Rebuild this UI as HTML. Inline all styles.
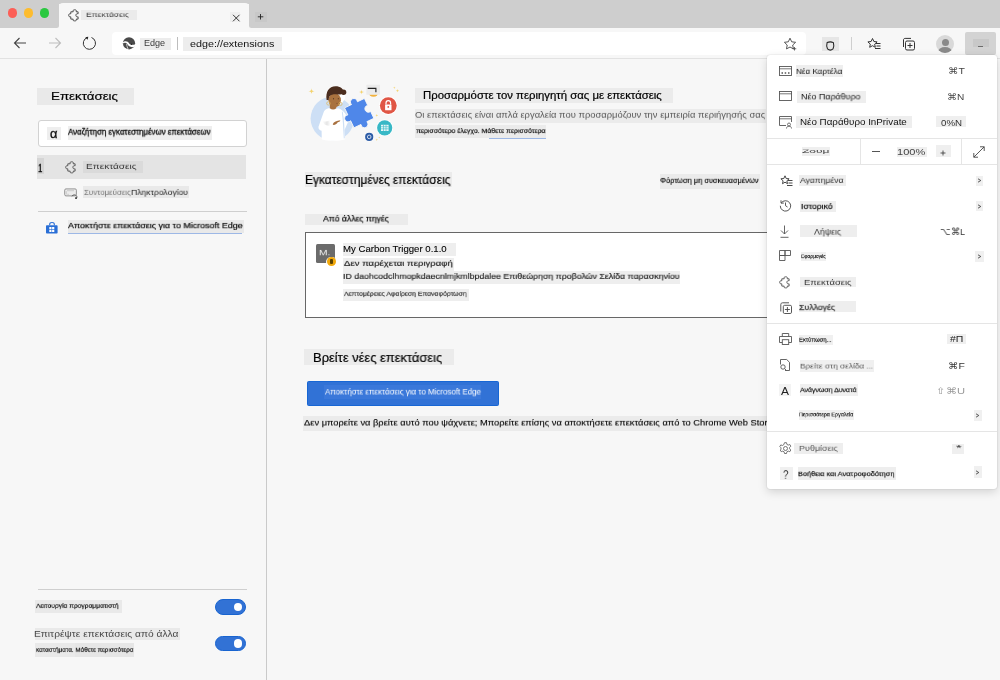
<!DOCTYPE html>
<html><head><meta charset="utf-8">
<style>
*{box-sizing:border-box;margin:0;padding:0}
html,body{width:1000px;height:680px;overflow:hidden;background:#f7f7f7;font-family:"Liberation Sans",sans-serif;color:#1a1a1a}
.a{position:absolute}
.x{position:absolute;white-space:nowrap;transform-origin:0 0;will-change:transform}
svg{position:absolute;overflow:visible}
</style></head><body>

<div class="a" style="left:0px;top:0px;width:59px;height:27.7px;background:#cecece;border-radius:0 0 2.5px 0"></div>
<div class="a" style="left:248.5px;top:0px;width:751.5px;height:27.7px;background:#cecece;border-radius:0 0 0 2.5px"></div>
<div class="a" style="left:59px;top:0px;width:189.5px;height:4px;background:#cecece;"></div>
<div class="a" style="left:7.75px;top:8.25px;width:9.5px;height:9.5px;background:#fc5f57;border-radius:50%"></div>
<div class="a" style="left:23.75px;top:8.25px;width:9.5px;height:9.5px;background:#fdbc2e;border-radius:50%"></div>
<div class="a" style="left:39.6px;top:8.25px;width:9.5px;height:9.5px;background:#2ac840;border-radius:50%"></div>
<div class="a" style="left:59px;top:3px;width:189.5px;height:26px;background:#f7f7f7;border-radius:4px 4px 0 0"></div>
<svg style="left:67.5px;top:9.2px" width="11" height="12" viewBox="0 0 11 12"><path d="M2.800 2.800 H5.200 C4.600 1.400 5.400 .8 6.700 .8 C8 .8 8.800 1.400 8.200 2.800 H10.100 V4.800 C8.800 4.300 7.900 5.200 7.900 6.300 C7.900 7.400 8.800 8.300 10.100 7.800 V10.100 H8.200 C8.800 11.400 8 11.900 6.700 11.900 C5.400 11.900 4.600 11.400 5.200 10.100 H2.800 V7.800 C1.500 8.300 .7 7.400 .7 6.300 C.7 5.200 1.500 4.300 2.800 4.800 Z" fill="none" stroke="#333" stroke-width=".85" stroke-linejoin="round"/></svg>
<div class="a" style="left:81.2px;top:10px;width:55.6px;height:10.4px;background:#ebebeb;"></div>
<div class="x" style="left:85.85px;top:11.95px;font-size:9px;line-height:9px;color:#3a3a3a;font-weight:400;font-family:&quot;Liberation Sans&quot;;transform:scale(0.9455,0.6889);">Επεκτάσεις</div>
<div class="a" style="left:230px;top:12px;width:10px;height:10px;background:#efefef;"></div>
<svg style="left:231.5px;top:14px" width="9" height="8" viewBox="0 0 9 8"><path d="M1 .8 7.500 7.300M7.500 .8 1 7.300" stroke="#222" stroke-width=".9"/></svg>
<div class="a" style="left:255px;top:12px;width:12px;height:10px;background:#c8c8c8;"></div>
<svg style="left:257px;top:13px" width="8" height="8" viewBox="0 0 8 8"><path d="M3.500 1v5.500M.8 3.800h5.500" stroke="#222" stroke-width=".9"/></svg>
<div class="a" style="left:0px;top:28px;width:1000px;height:30px;background:#f7f7f7;"></div>
<div class="a" style="left:0px;top:58px;width:1000px;height:1px;background:#e2e2e2;"></div>
<svg style="left:13px;top:37px" width="14" height="12" viewBox="0 0 14 12"><path d="M13 6H1.500M6.500 1 1.500 6l5 5" fill="none" stroke="#444" stroke-width="1.100"/></svg>
<svg style="left:48px;top:37px" width="14" height="12" viewBox="0 0 14 12"><path d="M1 6h11.500M7.500 1l5 5-5 5" fill="none" stroke="#bdbdbd" stroke-width="1.100"/></svg>
<svg style="left:82px;top:36px" width="15" height="15" viewBox="0 0 15 15"><path d="M9.500 1.500 A6.100 6.100 0 1 1 5.300 1.500" fill="none" stroke="#333" stroke-width="1"/><path d="M6.300 .8 L3.300 1.200 L5.600 3.700Z" fill="#222"/></svg>
<div class="a" style="left:112px;top:32px;width:694px;height:23px;background:#ffffff;border-radius:4px"></div>
<svg style="left:122px;top:36px" width="14" height="14" viewBox="0 0 14 14"><circle cx="7" cy="7.300" r="6.100" fill="#4a4a4a"/><path d="M.8 6.600 C2.500 4.600 5.800 4.700 7.200 7.400 C7.900 8.700 9.500 9.200 13.300 8.600 L13.200 10.300 C11 11.600 8.600 11.200 7.300 10.300 C6.300 9.600 5.800 8.700 5.300 7.900 C4.300 6.600 2.600 6.300 .9 7.400Z" fill="#fff"/><path d="M4.600 7.800 C4.900 9.800 5.200 11.500 6.300 13.400" fill="none" stroke="#fff" stroke-width=".7"/><circle cx="9.500" cy="8.300" r=".7" fill="#222"/></svg>
<div class="a" style="left:140px;top:37.6px;width:30.8px;height:12.3px;background:#ececec;"></div>
<div class="x" style="left:143.69px;top:39.28px;font-size:9px;line-height:9px;color:#3a3a3a;font-weight:400;font-family:&quot;Liberation Sans&quot;;transform:scale(1.0050,1.0000);">Edge</div>
<div class="a" style="left:177px;top:37.2px;width:1px;height:12.4px;background:#bdbdbd;"></div>
<div class="a" style="left:183.1px;top:37.2px;width:98.7px;height:13.4px;background:#ededed;"></div>
<div class="x" style="left:189.90px;top:39.00px;font-size:9.8px;line-height:9.8px;color:#111;font-weight:400;font-family:&quot;Liberation Sans&quot;;transform:scale(1.0974,1.0000);">edge://extensions</div>
<svg style="left:783px;top:37px" width="14" height="14" viewBox="0 0 14 14"><path d="M7 1.200l1.700 3.600 3.900.5-2.900 2.700.7 3.900L7 10 3.500 11.900l.7-3.900L1.400 5.300l3.900-.5z" fill="none" stroke="#444" stroke-width=".9"/><path d="M11.500 10v3.500M9.750 11.750h3.500" stroke="#444" stroke-width=".8"/></svg>
<div class="a" style="left:822px;top:37px;width:16.7px;height:14.4px;background:#e6e6e6;"></div>
<svg style="left:825.5px;top:41.3px" width="9" height="10" viewBox="0 0 9 10"><path d="M1.100 1.600 Q4.300 .1 7.400 1.600 Q8.500 5.600 7 7.900 Q4.300 10.300 1.500 7.900 Q0 5.600 1.100 1.600Z" fill="none" stroke="#222" stroke-width="1.050"/></svg>
<div class="a" style="left:850.5px;top:37px;width:1px;height:13px;background:#cfcfcf;"></div>
<svg style="left:867px;top:37px" width="14" height="14" viewBox="0 0 14 14"><path d="M5.500 1.500l1.400 3 3.200.4-2.400 2.200.6 3.200-2.800-1.600-2.800 1.600.6-3.200L.900 4.900l3.200-.4z" fill="none" stroke="#333" stroke-width="1"/><path d="M9 6.500h4.500M9.500 9h4M8 11.500h5.500" stroke="#333" stroke-width="1"/></svg>
<svg style="left:902px;top:37px" width="14" height="14" viewBox="0 0 14 14"><rect x="3.500" y="4" width="9" height="9" rx="1.500" fill="none" stroke="#333" stroke-width="1"/><path d="M1.500 10V3c0-1 .6-1.600 1.600-1.600H9" fill="none" stroke="#333" stroke-width="1"/><path d="M8 6v5M5.500 8.500h5" stroke="#333" stroke-width="1"/></svg>
<div class="a" style="left:936px;top:35px;width:18px;height:18px;border-radius:50%;background:#d9d9d9;overflow:hidden"><div class="a" style="left:5.500px;top:3.500px;width:7px;height:7px;border-radius:50%;background:#8a8a8a"></div><div class="a" style="left:2px;top:11.500px;width:14px;height:10px;border-radius:50%;background:#8a8a8a"></div></div>
<div class="a" style="left:965.2px;top:32px;width:31.3px;height:22.6px;background:#d3d3d3;border-radius:2px"></div>
<div class="a" style="left:973px;top:38.7px;width:16px;height:8.3px;background:#c8c8c8;"></div>
<div class="a" style="left:978px;top:45.6px;width:5px;height:1px;background:#555;opacity:.8"></div>
<div class="a" style="left:266px;top:59px;width:1px;height:621px;background:#cacaca;"></div>
<div class="a" style="left:37px;top:88px;width:97px;height:16.5px;background:#e9e9e9;"></div>
<div class="x" style="left:51.37px;top:91.01px;font-size:11.8px;line-height:11.8px;color:#000;font-weight:400;font-family:&quot;Liberation Sans&quot;;transform:scale(1.1293,1.0000);-webkit-text-stroke:.2px #000">Επεκτάσεις</div>
<div class="a" style="left:37.5px;top:119.5px;width:209px;height:27px;background:#ffffff;border:1px solid #d2d2d2;border-radius:3px;box-sizing:border-box"></div>
<div class="a" style="left:47.2px;top:126.5px;width:13.6px;height:13px;background:#eeeeee;"></div>
<div class="x" style="left:50.00px;top:128.42px;font-size:12.5px;line-height:12.5px;color:#111;font-weight:400;font-family:&quot;Liberation Sans&quot;;transform:scale(1.0286,1.0000);-webkit-text-stroke:.35px #111">α</div>
<div class="a" style="left:68px;top:126px;width:144px;height:13.6px;background:#eeeeee;"></div>
<div class="x" style="left:68.00px;top:127.80px;font-size:9px;line-height:9px;color:#000;font-weight:400;font-family:&quot;Liberation Sans&quot;;transform:scale(0.8796,0.9444);-webkit-text-stroke:.3px #000">Αναζήτηση εγκατεστημένων επεκτάσεων</div>
<div class="a" style="left:37.2px;top:154.5px;width:209.3px;height:24.5px;background:#e4e4e4;"></div>
<div class="a" style="left:37.2px;top:158.3px;width:7.2px;height:16px;background:#d5d5d5;"></div>
<div class="x" style="left:38.30px;top:163.03px;font-size:11.3px;line-height:11.3px;color:#111;font-weight:400;font-family:&quot;Liberation Sans&quot;;transform:scale(0.7000,1.0000);-webkit-text-stroke:.35px #111">1</div>
<svg style="left:64.5px;top:160.5px" width="11" height="12" viewBox="0 0 11 12"><path d="M2.800 2.800 H5.200 C4.600 1.400 5.400 .8 6.700 .8 C8 .8 8.800 1.400 8.200 2.800 H10.100 V4.800 C8.800 4.300 7.900 5.200 7.900 6.300 C7.900 7.400 8.800 8.300 10.100 7.800 V10.100 H8.200 C8.800 11.400 8 11.900 6.700 11.900 C5.400 11.900 4.600 11.400 5.200 10.100 H2.800 V7.800 C1.500 8.300 .7 7.400 .7 6.300 C.7 5.200 1.500 4.300 2.800 4.800 Z" fill="none" stroke="#444" stroke-width=".85" stroke-linejoin="round"/></svg>
<div class="a" style="left:82.9px;top:161px;width:59.9px;height:11.6px;background:#dadada;"></div>
<div class="x" style="left:86.48px;top:163.47px;font-size:9px;line-height:9px;color:#333;font-weight:400;font-family:&quot;Liberation Sans&quot;;transform:scale(1.1182,0.8444);">Επεκτάσεις</div>
<svg style="left:63.5px;top:187.5px" width="14" height="12" viewBox="0 0 14 12"><rect x=".7" y=".9" width="11.700" height="7" rx="1.300" fill="#ececec" stroke="#8a8a8a" stroke-width=".9"/><path d="M2.300 3.200v3.300M3.300 6.300h1.600M3 2.700h7" stroke="#bbb" stroke-width=".7"/><path d="M7.800 8.300 C9 6.400 11.600 6.400 12.800 8.200 C13.300 9 13 9.800 12.100 10.200" fill="none" stroke="#555" stroke-width=".9"/><circle cx="12" cy="10.100" r=".9" fill="#111"/></svg>
<div class="a" style="left:83.1px;top:186.2px;width:106.4px;height:12.3px;background:#e9e9e9;"></div>
<div class="x" style="left:83.50px;top:188.78px;font-size:9px;line-height:9px;color:#777;font-weight:400;font-family:&quot;Liberation Sans&quot;;transform:scale(0.8774,0.8556);">Συντομεύσεις</div>
<div class="x" style="left:131.15px;top:188.78px;font-size:9px;line-height:9px;color:#222;font-weight:400;font-family:&quot;Liberation Sans&quot;;transform:scale(0.9508,0.8556);">Πληκτρολογίου</div>
<div class="a" style="left:37.5px;top:211px;width:209px;height:1px;background:#cfcfcf;"></div>
<svg style="left:46px;top:221.5px" width="12" height="12" viewBox="0 0 12 12"><path d="M3.700 3.300V2.300C3.700 1.200 4.700.5 6 .5s2.300.7 2.300 1.800v1" fill="none" stroke="#2a6fd6" stroke-width="1.100"/><rect x="0" y="3.200" width="11.600" height="8.300" rx=".8" fill="#2a6fd6"/><rect x="3.300" y="5" width="2.200" height="2.200" fill="#fff"/><rect x="6.100" y="5" width="2.200" height="2.200" fill="#fff"/><rect x="3.300" y="7.800" width="2.200" height="2.200" fill="#fff"/><rect x="6.100" y="7.800" width="2.200" height="2.200" fill="#fff"/></svg>
<div class="a" style="left:68px;top:220.3px;width:176px;height:12.9px;background:#e9e9e9;"></div>
<div class="x" style="left:68.40px;top:222.33px;font-size:9px;line-height:9px;color:#000;font-weight:400;font-family:&quot;Liberation Sans&quot;;transform:scale(0.9881,0.8889);-webkit-text-stroke:.2px #000">Αποκτήστε επεκτάσεις για το Microsoft Edge</div>
<div class="a" style="left:68px;top:233px;width:174px;height:1px;background:#9db8e6;"></div>
<div class="a" style="left:37.5px;top:589px;width:209px;height:1px;background:#cfcfcf;"></div>
<div class="a" style="left:35px;top:599.8px;width:86.8px;height:13px;background:#e9e9e9;"></div>
<div class="x" style="left:35.50px;top:602.92px;font-size:9px;line-height:9px;color:#111;font-weight:400;font-family:&quot;Liberation Sans&quot;;transform:scale(0.7432,0.6667);;-webkit-text-stroke:.25px #111">Λειτουργία προγραμματιστή</div>
<div class="a" style="left:214.5px;top:599.3px;width:31.7px;height:15.6px;background:#3272d5;border-radius:8px;border:1px solid #1864d0;box-sizing:border-box"></div>
<div class="a" style="left:233.9px;top:603px;width:8.4px;height:8.4px;background:#ffffff;border-radius:50%"></div>
<div class="a" style="left:35.1px;top:628.1px;width:144.5px;height:12.3px;background:#e9e9e9;"></div>
<div class="x" style="left:34.47px;top:629.75px;font-size:9px;line-height:9px;color:#444;font-weight:400;font-family:&quot;Liberation Sans&quot;;transform:scale(1.1341,0.9778);">Επιτρέψτε επεκτάσεις από άλλα</div>
<div class="a" style="left:35.1px;top:642.8px;width:40px;height:14.1px;background:#e9e9e9;"></div>
<div class="a" style="left:75.1px;top:642.8px;width:58.9px;height:14.7px;background:#e6e6e6;"></div>
<div class="x" style="left:35.50px;top:647.02px;font-size:9px;line-height:9px;color:#111;font-weight:400;font-family:&quot;Liberation Sans&quot;;transform:scale(0.6993,0.6667);;-webkit-text-stroke:.25px #111">καταστήματα. Μάθετε περισσότερα</div>
<div class="a" style="left:214.5px;top:635.6px;width:31.7px;height:15.8px;background:#3272d5;border-radius:8px;border:1px solid #1864d0;box-sizing:border-box"></div>
<div class="a" style="left:233.9px;top:639.3px;width:8.4px;height:8.4px;background:#ffffff;border-radius:50%"></div>
<svg style="left:300px;top:80px" width="110" height="70" viewBox="0 0 110 70">
<circle cx="32.4" cy="38.5" r="21.8" fill="#cddff5"/>
<defs><linearGradient id="gsh" x1="0" y1="0" x2="1" y2="0"><stop offset="0" stop-color="#fff"/><stop offset=".55" stop-color="#dedede"/><stop offset="1" stop-color="#fff"/></linearGradient></defs>
<path d="M28.500 28.300 C25.500 29 24 30.800 23.200 33.500 L18.500 46.800 C18.200 48.800 19.300 50.300 21.600 50.800 L21.800 59.500 C28 61.300 39 61.300 45.200 59.300 L44.500 50 L48.300 41.500 C47 35 44 30.500 38.800 28.500 Z" fill="#fff"/>
<path d="M22.500 41 C23.500 44.500 26 46.200 30.500 45.500 L29.500 40.500 C27 41.800 24.500 41.800 22.500 41Z" fill="url(#gsh)" opacity=".8"/>
<path d="M41.800 31.500 C43 40 43.300 50 43.800 58.500 L44.700 58.300 C44.500 50 44.400 40 42.700 31.800Z" fill="#cddff5"/>
<path d="M29.800 25 h6.500 v3.300 c-2 1.600 -4.500 1.600 -6.500 0z" fill="#a8703f"/>
<circle cx="35.600" cy="15.500" r="9.800" fill="#fff"/>
<ellipse cx="34.700" cy="20.300" rx="6.200" ry="7" fill="#a9723f"/>
<path d="M26.600 20 C25.300 12 29 6.300 35.500 6.300 C40.500 6.300 43.500 9 44.200 12.800 C42.500 14.600 39 14.800 36.200 14.300 C33.300 14.200 30.800 14.800 29.600 16.200 C28.900 17.300 28.600 18.700 28.700 20.300 Z" fill="#4b2d1e"/>
<circle cx="43.600" cy="12.300" r="2.700" fill="#4b2d1e"/>
<circle cx="28.400" cy="23.400" r="1.700" fill="none" stroke="#e0b85a" stroke-width=".7"/>
<circle cx="40.400" cy="23.900" r="1.700" fill="none" stroke="#e0b85a" stroke-width=".7"/>
<circle cx="33.500" cy="18.700" r=".55" fill="#3a2418"/><circle cx="38.300" cy="18.700" r=".55" fill="#3a2418"/>
<path d="M36 23.300 q1.500 .6 2.500 -.3" fill="none" stroke="#7a4a2a" stroke-width=".5"/>
<path d="M32.700 44.300 C34 41.500 36.500 40.700 40.400 40.200 L39.500 41.800 L37.700 42.300 C37.200 43.600 35.500 45 33.500 45z" fill="#a8703f"/>
<g transform="translate(59.200 33.100) rotate(-25.400) scale(1.06)">
<path d="M-10.400 -10.400 H-3.070 A3.300 3.300 0 1 1 3.070 -10.400 H10.400 V-3.200 A3.300 3.300 0 1 0 10.400 3.200 V10.400 H3.070 A3.300 3.300 0 1 1 -3.070 10.400 H-10.400 V3.070 A3.300 3.300 0 1 1 -10.400 -3.070 Z" fill="#4f87e9" stroke="#f7f7f7" stroke-width=".8"/>
</g>
<circle cx="73.500" cy="11.500" r="5.200" fill="#f3b23c"/>
<rect x="66.300" y="4.800" width="13.700" height="10" fill="#ebebeb"/>
<path d="M67.700 8.400 H75.900 V12.200" fill="none" stroke="#222" stroke-width="1.1"/>
<circle cx="88.300" cy="25.600" r="9.300" fill="#fff"/>
<circle cx="88.300" cy="25.600" r="8.400" fill="#e05645"/>
<path d="M86 24.600 v-1.600 a2.300 2.300 0 0 1 4.600 0 v1.600" fill="none" stroke="#fff" stroke-width="1.200"/>
<rect x="85.100" y="24.400" width="6.400" height="5.800" rx=".5" fill="#fff"/>
<circle cx="88.300" cy="26.900" r=".9" fill="#e05645"/>
<circle cx="84.700" cy="47.800" r="8.400" fill="#fff"/>
<circle cx="84.700" cy="47.800" r="7.600" fill="#38b8c6"/>
<rect x="81" y="44.800" width="7.600" height="6.200" fill="#e8f6f8"/>
<path d="M81 46.700h7.600M81 48.800h7.600M83.500 44.800v6.200M86 44.800v6.200" stroke="#38b8c6" stroke-width=".6"/>
<circle cx="69.200" cy="56.900" r="4.700" fill="#fff"/>
<circle cx="69.200" cy="56.900" r="4.100" fill="#2d5ca6"/>
<circle cx="69.200" cy="56.900" r="1.800" fill="none" stroke="#dfe8f5" stroke-width=".9"/>
<path d="M11.5 8.3Q11.5 11.3 14.5 11.3Q11.5 11.3 11.5 14.3Q11.5 11.3 8.5 11.3Q11.5 11.3 11.5 8.3Z" fill="#f4d36e"/><path d="M61.5 9.5Q61.5 12 64.0 12Q61.5 12 61.5 14.5Q61.5 12 59.0 12Q61.5 12 61.5 9.5Z" fill="#f4d36e"/><path d="M94.3 6.5Q94.3 7.8 95.6 7.8Q94.3 7.8 94.3 9.1Q94.3 7.8 93.0 7.8Q94.3 7.8 94.3 6.5Z" fill="#f4d36e"/><path d="M97.5 9.1Q97.5 10.7 99.1 10.7Q97.5 10.7 97.5 12.299999999999999Q97.5 10.7 95.9 10.7Q97.5 10.7 97.5 9.1Z" fill="#f4d36e"/><path d="M76.8 34.1Q76.8 35.4 78.1 35.4Q76.8 35.4 76.8 36.699999999999996Q76.8 35.4 75.5 35.4Q76.8 35.4 76.8 34.1Z" fill="#f4d36e"/><path d="M76.8 58.5Q76.8 59.8 78.1 59.8Q76.8 59.8 76.8 61.099999999999994Q76.8 59.8 75.5 59.8Q76.8 59.8 76.8 58.5Z" fill="#f4d36e"/><path d="M79.2 56.4Q79.2 57.4 80.2 57.4Q79.2 57.4 79.2 58.4Q79.2 57.4 78.2 57.4Q79.2 57.4 79.2 56.4Z" fill="#f4d36e"/>
</svg>
<div class="a" style="left:415px;top:88.2px;width:257.8px;height:14.6px;background:#ebebeb;"></div>
<div class="x" style="left:423.46px;top:90.83px;font-size:10px;line-height:10px;color:#000;font-weight:400;font-family:&quot;Liberation Sans&quot;;transform:scale(1.1359,1.0000);-webkit-text-stroke:.2px #000">Προσαρμόστε τον περιηγητή σας με επεκτάσεις</div>
<div class="a" style="left:415px;top:108.8px;width:351px;height:14px;background:#ebebeb;"></div>
<div class="x" style="left:415.20px;top:111.02px;font-size:9px;line-height:9px;color:#555;font-weight:400;font-family:&quot;Liberation Sans&quot;;transform:scale(1.0442,0.9556);">Οι επεκτάσεις είναι απλά εργαλεία που προσαρμόζουν την εμπειρία περιήγησής σας</div>
<div class="a" style="left:415px;top:125.2px;width:131px;height:12.6px;background:#ebebeb;"></div>
<div class="x" style="left:415.50px;top:128.17px;font-size:9px;line-height:9px;color:#111;font-weight:400;font-family:&quot;Liberation Sans&quot;;transform:scale(0.7708,0.7000);;-webkit-text-stroke:.25px #111">περισσότερο έλεγχο. Μάθετε περισσότερα</div>
<div class="a" style="left:488.6px;top:138px;width:57.4px;height:1px;background:#9db8e6;"></div>
<div class="a" style="left:305px;top:172px;width:146.6px;height:15px;background:#ebebeb;"></div>
<div class="x" style="left:304.54px;top:173.50px;font-size:12.4px;line-height:12.4px;color:#000;font-weight:400;font-family:&quot;Liberation Sans&quot;;transform:scale(0.9633,1.0000);-webkit-text-stroke:.2px #000">Εγκατεστημένες επεκτάσεις</div>
<div class="a" style="left:659.6px;top:174px;width:100.4px;height:14.8px;background:#ebebeb;"></div>
<div class="x" style="left:660.30px;top:177.30px;font-size:9px;line-height:9px;color:#000;font-weight:400;font-family:&quot;Liberation Sans&quot;;transform:scale(0.8294,0.8667);-webkit-text-stroke:.15px #000">Φόρτωση μη συσκευασμένων</div>
<div class="a" style="left:305px;top:213.6px;width:103px;height:11.4px;background:#ebebeb;"></div>
<div class="x" style="left:323.00px;top:215.37px;font-size:9px;line-height:9px;color:#000;font-weight:400;font-family:&quot;Liberation Sans&quot;;transform:scale(0.9565,0.9222);-webkit-text-stroke:.2px #000">Από άλλες πηγές</div>
<div class="a" style="left:305px;top:232px;width:480px;height:85.5px;background:#ffffff;border:1.5px solid #676767;box-sizing:border-box"></div>
<div class="a" style="left:315.9px;top:244px;width:19.1px;height:18.7px;background:#6b6b6b;border-radius:1.5px"></div>
<div class="x" style="left:319.36px;top:249.03px;font-size:9px;line-height:9px;color:#f0f0f0;font-weight:400;font-family:&quot;Liberation Sans&quot;;transform:scale(1.1375,0.8889);">M.</div>
<div class="a" style="left:326.4px;top:256.7px;width:10.2px;height:10.2px;background:#ffffff;border-radius:50%"></div>
<div class="a" style="left:327.1px;top:257.4px;width:8.8px;height:8.8px;background:#f1a80b;border-radius:50%"></div>
<div class="a" style="left:329.6px;top:259.3px;width:3.8px;height:5.2px;background:#5a4200;border-radius:1px"></div>
<div class="a" style="left:343px;top:243px;width:113px;height:12.5px;background:#eeeeee;"></div>
<div class="x" style="left:342.55px;top:245.11px;font-size:9.2px;line-height:9.2px;color:#000;font-weight:400;font-family:&quot;Liberation Sans&quot;;transform:scale(1.0469,1.0000);-webkit-text-stroke:.1px #000">My Carbon Trigger 0.1.0</div>
<div class="a" style="left:343px;top:258.1px;width:111px;height:12.9px;background:#eeeeee;"></div>
<div class="x" style="left:343.60px;top:260.35px;font-size:9px;line-height:9px;color:#222;font-weight:400;font-family:&quot;Liberation Sans&quot;;transform:scale(1.0627,0.8333);-webkit-text-stroke:.2px #222">Δεν παρέχεται περιγραφή</div>
<div class="a" style="left:343px;top:271px;width:336.7px;height:12.5px;background:#eeeeee;"></div>
<div class="x" style="left:342.62px;top:273.25px;font-size:9px;line-height:9px;color:#222;font-weight:400;font-family:&quot;Liberation Sans&quot;;transform:scale(0.9778,0.8333);-webkit-text-stroke:.2px #222">ID daohcodclhmopkdaecnlmjkmlbpdalee Επιθεώρηση προβολών Σελίδα παρασκηνίου</div>
<div class="a" style="left:343px;top:288.7px;width:126px;height:11.9px;background:#eeeeee;"></div>
<div class="x" style="left:343.60px;top:291.42px;font-size:9px;line-height:9px;color:#333;font-weight:400;font-family:&quot;Liberation Sans&quot;;transform:scale(0.7650,0.6667);;-webkit-text-stroke:.25px #333">Λεπτομέρειες Αφαίρεση Επαναφόρτωση</div>
<div class="a" style="left:303.8px;top:348.8px;width:150.7px;height:16.5px;background:#ebebeb;"></div>
<div class="x" style="left:313.40px;top:350.60px;font-size:13px;line-height:13px;color:#000;font-weight:400;font-family:&quot;Liberation Sans&quot;;transform:scale(0.9961,1.0000);-webkit-text-stroke:.2px #000">Βρείτε νέες επεκτάσεις</div>
<div class="a" style="left:306.8px;top:381px;width:192px;height:24.8px;background:#3172d6;border-radius:1.5px;border:1px solid #1766d4;box-sizing:border-box"></div>
<div class="a" style="left:324px;top:385px;width:156.9px;height:14px;background:#3a78da;"></div>
<div class="x" style="left:324.50px;top:387.97px;font-size:9px;line-height:9px;color:#ffffff;font-weight:400;font-family:&quot;Liberation Sans&quot;;transform:scale(0.8824,0.9222);">Αποκτήστε επεκτάσεις για το Microsoft Edge</div>
<div class="a" style="left:303px;top:416px;width:470px;height:14.5px;background:#ebebeb;"></div>
<div class="x" style="left:303.50px;top:418.97px;font-size:9px;line-height:9px;color:#000;font-weight:400;font-family:&quot;Liberation Sans&quot;;transform:scale(1.0341,0.9222);-webkit-text-stroke:.12px #000">Δεν μπορείτε να βρείτε αυτό που ψάχνετε; Μπορείτε επίσης να αποκτήσετε επεκτάσεις από το Chrome Web Store.</div>
<div class="a" style="left:767px;top:55px;width:230px;height:434px;background:#ffffff;border-radius:3px;box-shadow:0 0 1.500px rgba(0,0,0,.22),0 3px 10px rgba(0,0,0,.15)"></div>
<svg style="left:779px;top:66px" width="13" height="10" viewBox="0 0 13 10"><rect x=".5" y=".5" width="12" height="9" fill="none" stroke="#555" stroke-width=".9"/><path d="M.5 2.800h12" stroke="#555" stroke-width=".8"/><path d="M2.500 7h1.500M5.700 7h1.500M9 7h1.500" stroke="#555" stroke-width="1.400"/></svg>
<div class="a" style="left:796.1px;top:65.1px;width:46.9px;height:11.6px;background:#eeeeee;"></div>
<div class="x" style="left:796.00px;top:67.58px;font-size:9px;line-height:9px;color:#111;font-weight:400;font-family:&quot;Liberation Sans&quot;;transform:scale(0.9000,0.8556);">Νέα Καρτέλα</div>
<div class="x" style="left:947.74px;top:67.23px;font-size:9px;line-height:9px;color:#444;font-weight:400;font-family:&quot;Liberation Sans&quot;;transform:scale(1.1615,1.0000);">⌘T</div>
<svg style="left:779px;top:91px" width="13" height="10" viewBox="0 0 13 10"><rect x=".5" y=".5" width="12" height="9" fill="none" stroke="#555" stroke-width=".9"/><path d="M.5 2.800h12" stroke="#555" stroke-width=".8"/></svg>
<div class="a" style="left:797.2px;top:91.25px;width:68.5px;height:11.65px;background:#eeeeee;"></div>
<div class="x" style="left:800.71px;top:93.06px;font-size:9px;line-height:9px;color:#111;font-weight:400;font-family:&quot;Liberation Sans&quot;;transform:scale(0.9898,0.9111);">Νέο Παράθυρο</div>
<div class="x" style="left:947.48px;top:92.58px;font-size:9px;line-height:9px;color:#444;font-weight:400;font-family:&quot;Liberation Sans&quot;;transform:scale(1.1214,1.0000);">⌘N</div>
<svg style="left:779px;top:115.5px" width="13" height="13" viewBox="0 0 13 13"><path d="M7 9.500H.5V.5h12V6" fill="none" stroke="#555" stroke-width=".9"/><path d="M.5 2.800h12" stroke="#555" stroke-width=".8"/><circle cx="10" cy="8.500" r="1.500" fill="none" stroke="#555" stroke-width=".8"/><path d="M7.500 12.500c0-1.500 1-2.300 2.500-2.300s2.500.8 2.500 2.300" fill="none" stroke="#555" stroke-width=".8"/></svg>
<div class="a" style="left:796.1px;top:116.2px;width:115.6px;height:12.3px;background:#eeeeee;"></div>
<div class="x" style="left:799.51px;top:118.08px;font-size:9px;line-height:9px;color:#111;font-weight:400;font-family:&quot;Liberation Sans&quot;;transform:scale(1.0887,1.0000);">Νέο Παράθυρο InPrivate</div>
<div class="a" style="left:936.1px;top:116.1px;width:29.7px;height:11.2px;background:#efefef;"></div>
<div class="x" style="left:940.90px;top:118.98px;font-size:9px;line-height:9px;color:#333;font-weight:400;font-family:&quot;Liberation Sans&quot;;transform:scale(1.0789,1.0000);">0%N</div>
<div class="a" style="left:767px;top:138.4px;width:230px;height:1px;background:#e5e5e5;"></div>
<div class="a" style="left:802px;top:147.2px;width:27.9px;height:9.3px;background:#efefef;"></div>
<div class="x" style="left:802.30px;top:148.97px;font-size:9px;line-height:9px;color:#444;font-weight:400;font-family:&quot;Liberation Sans&quot;;transform:scale(1.3350,0.5556);">Ζουμ</div>
<div class="a" style="left:860.2px;top:139px;width:1px;height:25px;background:#e5e5e5;"></div>
<div class="a" style="left:872px;top:151px;width:8px;height:1px;background:#555;"></div>
<div class="a" style="left:896.6px;top:147.3px;width:30.1px;height:10.1px;background:#efefef;"></div>
<div class="x" style="left:896.77px;top:148.38px;font-size:9px;line-height:9px;color:#444;font-weight:400;font-family:&quot;Liberation Sans&quot;;transform:scale(1.2273,1.0000);">100%</div>
<div class="a" style="left:936px;top:145px;width:14.7px;height:11.7px;background:#efefef;"></div>
<svg style="left:940.3px;top:149.6px" width="6" height="6" viewBox="0 0 6 6"><path d="M3 .5v5M.5 3h5" stroke="#333" stroke-width=".8"/></svg>
<div class="a" style="left:961.2px;top:139px;width:1px;height:25px;background:#e5e5e5;"></div>
<svg style="left:972.5px;top:145.5px" width="12" height="12" viewBox="0 0 12 12"><path d="M.8 11.200 11.200.8M11.200.8H7M11.200.8V5M.8 11.200H5M.8 11.200V7" fill="none" stroke="#444" stroke-width=".9"/></svg>
<div class="a" style="left:767px;top:164px;width:230px;height:1px;background:#e5e5e5;"></div>
<svg style="left:779.5px;top:175px" width="13" height="12" viewBox="0 0 13 12"><path d="M5 .8l1.200 2.700 2.900.3-2.200 2 .6 2.900L5 7.200 2.500 8.700l.6-2.900-2.200-2 2.900-.3z" fill="none" stroke="#333" stroke-width=".9"/><path d="M8 5.500h4.500M8.500 8h4M7 10.500h5.500" stroke="#333" stroke-width=".9"/></svg>
<div class="a" style="left:799.3px;top:175.3px;width:46.3px;height:10.5px;background:#eeeeee;"></div>
<div class="x" style="left:800.10px;top:177.15px;font-size:9px;line-height:9px;color:#2a2a2a;font-weight:400;font-family:&quot;Liberation Sans&quot;;transform:scale(0.9522,0.8333);">Αγαπημένα</div>
<div class="a" style="left:976px;top:175.9px;width:7.4px;height:9.7px;background:#f0f0f0;"></div>
<svg style="left:977.0px;top:178.0px" width="5" height="5" viewBox="0 0 5 5"><path d="M1 .8 3.800 2.500 1 4.200" fill="none" stroke="#333" stroke-width=".8"/></svg>
<svg style="left:779.2px;top:199px" width="13" height="13" viewBox="0 0 13 13"><path d="M2.200 4A5.200 5.200 0 1 1 1.300 6.800" fill="none" stroke="#444" stroke-width=".9"/><path d="M2 1.300v2.800h2.800M6.500 3.500v3.200l2 1.300" fill="none" stroke="#444" stroke-width=".9"/></svg>
<div class="a" style="left:800.1px;top:201.2px;width:35.5px;height:10.5px;background:#eeeeee;"></div>
<div class="x" style="left:801.34px;top:202.55px;font-size:9px;line-height:9px;color:#111;font-weight:400;font-family:&quot;Liberation Sans&quot;;transform:scale(0.9563,0.8333);;-webkit-text-stroke:.25px #111">Ιστορικό</div>
<div class="a" style="left:976px;top:201.4px;width:7.4px;height:9.4px;background:#f0f0f0;"></div>
<svg style="left:977.0px;top:203.5px" width="5" height="5" viewBox="0 0 5 5"><path d="M1 .8 3.800 2.500 1 4.200" fill="none" stroke="#333" stroke-width=".8"/></svg>
<svg style="left:780.4px;top:225px" width="9" height="13" viewBox="0 0 9 13"><path d="M4.500 .5v8.500M1 5.500l3.500 3.500 3.500-3.500M.5 12.300h8" fill="none" stroke="#555" stroke-width=".9"/></svg>
<div class="a" style="left:800px;top:225px;width:56.5px;height:11.6px;background:#eeeeee;"></div>
<div class="x" style="left:814.40px;top:227.60px;font-size:9px;line-height:9px;color:#333;font-weight:400;font-family:&quot;Liberation Sans&quot;;transform:scale(0.9750,0.9444);">Λήψεις</div>
<div class="x" style="left:939.68px;top:226.96px;font-size:9.5px;line-height:9.5px;color:#333;font-weight:400;font-family:&quot;Liberation Sans&quot;;transform:scale(0.9154,1.0000);">⌥⌘L</div>
<svg style="left:778.9px;top:250.2px" width="12" height="11" viewBox="0 0 12 11"><path d="M.5 .5h5.500v5H.5zM.5 5.500h5.500v5H.5zM6 .5h5.500v5H6z" fill="none" stroke="#555" stroke-width=".9"/></svg>
<div class="a" style="left:800.5px;top:252px;width:25.4px;height:9.3px;background:#f0f0f0;"></div>
<div class="x" style="left:800.65px;top:253.97px;font-size:9px;line-height:9px;color:#222;font-weight:400;font-family:&quot;Liberation Sans&quot;;transform:scale(0.5455,0.5556);;-webkit-text-stroke:.25px #222">Εφαρμογές</div>
<div class="a" style="left:975.3px;top:251px;width:8.4px;height:10.9px;background:#f0f0f0;"></div>
<svg style="left:977.0px;top:254.0px" width="5" height="5" viewBox="0 0 5 5"><path d="M1 .8 3.800 2.500 1 4.200" fill="none" stroke="#333" stroke-width=".8"/></svg>
<svg style="left:778.6px;top:275.9px" width="11" height="12" viewBox="0 0 11 12"><path d="M2.800 2.800 H5.200 C4.600 1.400 5.400 .8 6.700 .8 C8 .8 8.800 1.400 8.200 2.800 H10.100 V4.800 C8.800 4.300 7.900 5.200 7.900 6.300 C7.900 7.400 8.800 8.300 10.100 7.800 V10.100 H8.200 C8.800 11.400 8 11.900 6.700 11.900 C5.400 11.900 4.600 11.400 5.200 10.100 H2.800 V7.800 C1.500 8.300 .7 7.400 .7 6.300 C.7 5.200 1.500 4.300 2.800 4.800 Z" fill="none" stroke="#444" stroke-width=".85" stroke-linejoin="round"/></svg>
<div class="a" style="left:800px;top:276.7px;width:56px;height:10.8px;background:#eeeeee;"></div>
<div class="x" style="left:803.55px;top:278.60px;font-size:9px;line-height:9px;color:#333;font-weight:400;font-family:&quot;Liberation Sans&quot;;transform:scale(1.0523,0.8667);">Επεκτάσεις</div>
<svg style="left:779.9px;top:302px" width="12" height="12" viewBox="0 0 12 12"><rect x="3.300" y="3.300" width="8.200" height="8.200" rx="1.300" fill="none" stroke="#444" stroke-width=".9"/><path d="M.8 9.500V2.500C.8 1.500 1.500.8 2.500.8h6.500" fill="none" stroke="#444" stroke-width=".9"/><path d="M7.400 5v5M4.900 7.500h5" stroke="#444" stroke-width=".9"/></svg>
<div class="a" style="left:798.9px;top:301.1px;width:57.6px;height:11.4px;background:#eeeeee;"></div>
<div class="x" style="left:799.40px;top:303.55px;font-size:9px;line-height:9px;color:#333;font-weight:400;font-family:&quot;Liberation Sans&quot;;transform:scale(0.9757,0.8333);;-webkit-text-stroke:.25px #333">Συλλογές</div>
<div class="a" style="left:767px;top:323px;width:230px;height:1px;background:#e5e5e5;"></div>
<svg style="left:779.1px;top:333.1px" width="13" height="12" viewBox="0 0 13 12"><path d="M3.300 3.500V.5h6.400v3M3.300 9.500H.5V3.500h12v6H9.700" fill="none" stroke="#555" stroke-width=".9"/><rect x="3.300" y="6.700" width="6.400" height="4.800" fill="none" stroke="#555" stroke-width=".9"/></svg>
<div class="a" style="left:799.3px;top:335.3px;width:33.3px;height:9.6px;background:#f0f0f0;"></div>
<div class="x" style="left:799.36px;top:336.82px;font-size:9px;line-height:9px;color:#111;font-weight:400;font-family:&quot;Liberation Sans&quot;;transform:scale(0.6449,0.6667);;-webkit-text-stroke:.25px #111">Εκτύπωση...</div>
<div class="a" style="left:947.3px;top:334.2px;width:18.5px;height:10.2px;background:#efefef;"></div>
<div class="x" style="left:949.80px;top:335.38px;font-size:9px;line-height:9px;color:#222;font-weight:400;font-family:&quot;Liberation Sans&quot;;transform:scale(1.1636,1.0000);">#Π</div>
<svg style="left:780.1px;top:358.5px" width="10" height="12" viewBox="0 0 10 12"><path d="M5 11.500h4.500V3.300L6.700.5H.5v5" fill="none" stroke="#555" stroke-width=".9"/><circle cx="3" cy="8" r="2.200" fill="none" stroke="#555" stroke-width=".9"/><path d="M4.600 9.600 6.300 11.300" stroke="#555" stroke-width=".9"/></svg>
<div class="a" style="left:800px;top:360.3px;width:73.8px;height:12.1px;background:#f0f0f0;"></div>
<div class="x" style="left:799.79px;top:362.87px;font-size:9px;line-height:9px;color:#555;font-weight:400;font-family:&quot;Liberation Sans&quot;;transform:scale(0.9141,0.7778);">Βρείτε στη σελίδα ...</div>
<div class="x" style="left:948.15px;top:361.58px;font-size:9px;line-height:9px;color:#333;font-weight:400;font-family:&quot;Liberation Sans&quot;;transform:scale(1.1538,1.0000);">⌘F</div>
<div class="a" style="left:779.1px;top:383.8px;width:12.1px;height:12.5px;background:#f3f3f3;"></div>
<div class="x" style="left:780.60px;top:386.29px;font-size:11px;line-height:11px;color:#222;font-weight:400;font-family:&quot;Liberation Sans&quot;;transform:scale(1.0857,1.0000);">A</div>
<div class="a" style="left:800px;top:383.8px;width:57.6px;height:11.8px;background:#f0f0f0;"></div>
<div class="x" style="left:800.30px;top:386.90px;font-size:9px;line-height:9px;color:#111;font-weight:400;font-family:&quot;Liberation Sans&quot;;transform:scale(0.7712,0.7222);;-webkit-text-stroke:.25px #111">Ανάγνωση Δυνατά</div>
<div class="x" style="left:935.82px;top:386.58px;font-size:9px;line-height:9px;color:#999;font-weight:400;font-family:&quot;Liberation Sans&quot;;transform:scale(1.2381,1.0000);">⇧⌘U</div>
<div class="a" style="left:799.3px;top:410px;width:54.4px;height:10.3px;background:#f0f0f0;"></div>
<div class="x" style="left:799.10px;top:412.24px;font-size:9px;line-height:9px;color:#222;font-weight:400;font-family:&quot;Liberation Sans&quot;;transform:scale(0.5989,0.6111);;-webkit-text-stroke:.25px #222">Περισσότερα Εργαλεία</div>
<div class="a" style="left:974px;top:410px;width:8px;height:10.9px;background:#f0f0f0;"></div>
<svg style="left:975.0px;top:413.0px" width="5" height="5" viewBox="0 0 5 5"><path d="M1 .8 3.800 2.500 1 4.200" fill="none" stroke="#333" stroke-width=".8"/></svg>
<div class="a" style="left:767px;top:431.3px;width:230px;height:1px;background:#e5e5e5;"></div>
<svg style="left:778.9px;top:441.7px" width="13" height="13" viewBox="0 0 13 13"><circle cx="6.500" cy="6.500" r="2" fill="none" stroke="#666" stroke-width=".9"/><path d="M5.500.7h2l.4 1.700 1.300.7 1.600-.6 1 1.700-1.200 1.200v1.400l1.200 1.200-1 1.700-1.600-.6-1.300.7-.4 1.700h-2l-.4-1.700-1.300-.7-1.600.6-1-1.700L2 7.200V5.800L.8 4.600l1-1.700 1.600.6 1.300-.7z" fill="none" stroke="#666" stroke-width=".9"/></svg>
<div class="a" style="left:794.2px;top:443px;width:49.1px;height:11px;background:#eeeeee;"></div>
<div class="x" style="left:798.71px;top:444.75px;font-size:9px;line-height:9px;color:#555;font-weight:400;font-family:&quot;Liberation Sans&quot;;transform:scale(0.9921,0.8333);">Ρυθμίσεις</div>
<div class="a" style="left:952.2px;top:443.9px;width:11.6px;height:9.7px;background:#efefef;"></div>
<div class="x" style="left:955.50px;top:444.23px;font-size:9px;line-height:9px;color:#222;font-weight:400;font-family:&quot;Liberation Sans&quot;;transform:scale(1.6667,0.8889);">*</div>
<div class="a" style="left:780.2px;top:466.7px;width:12.8px;height:13px;background:#f0f0f0;"></div>
<div class="x" style="left:782.98px;top:468.64px;font-size:12px;line-height:12px;color:#444;font-weight:400;font-family:&quot;Liberation Sans&quot;;transform:scale(0.8167,1.0000);">?</div>
<div class="a" style="left:798.1px;top:467px;width:97.9px;height:12.7px;background:#eeeeee;"></div>
<div class="x" style="left:797.88px;top:470.70px;font-size:9px;line-height:9px;color:#111;font-weight:400;font-family:&quot;Liberation Sans&quot;;transform:scale(0.8216,0.7222);;-webkit-text-stroke:.25px #111">Βοήθεια και Ανατροφοδότηση</div>
<div class="a" style="left:974px;top:465.8px;width:8px;height:12.1px;background:#f0f0f0;"></div>
<svg style="left:975.0px;top:469.5px" width="5" height="5" viewBox="0 0 5 5"><path d="M1 .8 3.800 2.500 1 4.200" fill="none" stroke="#333" stroke-width=".8"/></svg>
</body></html>
